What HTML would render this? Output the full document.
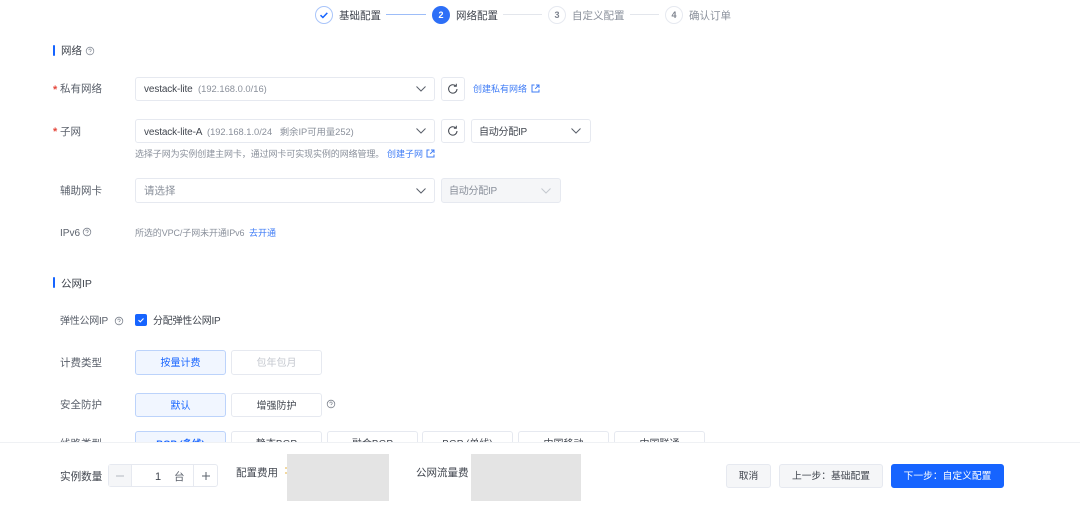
<!DOCTYPE html>
<html lang="zh"><head><meta charset="utf-8">
<style>
html,body{margin:0;padding:0;background:#fff}
#p{position:relative;width:1080px;height:517px;overflow:hidden;background:#fff;font-family:"Liberation Sans","Noto Sans CJK SC",sans-serif;font-size:10.5px;color:#41464f;filter:blur(.35px)}
#p *{box-sizing:border-box}
.t{position:absolute;white-space:nowrap;line-height:14px;height:14px}
.b{position:absolute;border:1px solid #e6e9f0;border-radius:3px;background:#fff}
.btn{position:absolute;border:1px solid #e6e9f0;border-radius:3px;background:#fff;text-align:center;font-size:10px;color:#41464f}
.on{background:#f1f6ff;border-color:#bcd3fb;color:#1664ff}
.c{position:absolute;border-radius:50%;text-align:center;font-weight:bold;font-size:9px}
.l{position:absolute;height:1px}
.g{color:#8a909b}.lb{color:#5a606b}.bl{color:#3f7cf6}
.star{color:#e5483d;font-size:11px;font-weight:bold}
.s9{font-size:9px}.s10{font-size:10px;letter-spacing:-.25px}
.v{font-size:10px;letter-spacing:-.12px}
svg{position:absolute;overflow:visible}
.bar{position:absolute;left:53px;width:2px;height:11px;background:#1664ff;border-radius:1px}
.gray{position:absolute;background:#e4e4e4;top:454px;height:47px}
.ft{font-size:9.75px}
</style></head><body><div id="p">

<!-- steps -->
<div class="c" style="left:315px;top:6px;width:18px;height:18px;border:1.5px solid #a9c5fa"></div>
<svg style="left:315px;top:6px" width="18" height="18"><path d="M5.5 9.2l2.4 2.3 4.4-4.6" fill="none" stroke="#1664ff" stroke-width="1.5"/></svg>
<div class="t" style="left:339px;top:9px;color:#41464f">基础配置</div>
<div class="l" style="left:386px;top:14px;width:40px;background:#9dbdf8"></div>
<div class="c" style="left:432px;top:6px;width:18px;height:18px;background:#2d6ff7;color:#fff;line-height:18px">2</div>
<div class="t" style="left:456px;top:9px;color:#41464f">网络配置</div>
<div class="l" style="left:503px;top:14px;width:39px;background:#e3e6ec"></div>
<div class="c" style="left:548px;top:6px;width:18px;height:18px;border:1px solid #e6e9f0;color:#7d838e;line-height:16px">3</div>
<div class="t g" style="left:572px;top:9px">自定义配置</div>
<div class="l" style="left:630px;top:14px;width:29px;background:#e3e6ec"></div>
<div class="c" style="left:665px;top:6px;width:18px;height:18px;border:1px solid #e6e9f0;color:#7d838e;line-height:16px">4</div>
<div class="t g" style="left:689px;top:9px">确认订单</div>

<!-- section network -->
<div class="bar" style="top:45px"></div>
<div class="t" style="left:61px;top:44px">网络</div>
<svg style="left:85px;top:46px" width="10" height="10"><circle cx="5" cy="5" r="3.8" fill="none" stroke="#8a909b" stroke-width=".8"/><path d="M3.8 4.2a1.2 1.2 0 1 1 1.7 1.1c-.4.2-.5.4-.5.8M5 7v.4" fill="none" stroke="#8a909b" stroke-width=".7"/></svg>

<!-- row 1 -->
<div class="t star" style="left:53px;top:83px">*</div>
<div class="t lb" style="left:60px;top:82px">私有网络</div>
<div class="b" style="left:135px;top:77px;width:300px;height:24px"></div>
<div class="t v" style="left:144px;top:83px">vestack-lite</div>
<div class="t g" style="left:198px;top:82px;font-size:9.4px">(192.168.0.0/16)</div>
<svg style="left:415px;top:85px" width="12" height="8"><path d="M1.5 1.5L6 6l4.5-4.5" fill="none" stroke="#5a606b" stroke-width="1"/></svg>
<div class="b" style="left:441px;top:77px;width:24px;height:24px"></div>
<svg style="left:447px;top:83px" width="12" height="12"><path d="M10 6a4.2 4.2 0 1 1-1.2-3M9.3 .8V3.2H6.9" fill="none" stroke="#41464f" stroke-width="1"/></svg>
<div class="t bl s9" style="left:473px;top:82px">创建私有网络</div>
<svg style="left:531px;top:84px" width="9" height="9"><path d="M3.5 1H1v7h7V5.5M5 1h3v3M8 1L4.2 4.8" fill="none" stroke="#3f7cf6" stroke-width="1"/></svg>

<!-- row 2 -->
<div class="t star" style="left:53px;top:125px">*</div>
<div class="t lb" style="left:60px;top:125px">子网</div>
<div class="b" style="left:135px;top:119px;width:300px;height:24px"></div>
<div class="t v" style="left:144px;top:126px">vestack-lite-A</div>
<div class="t g" style="left:207px;top:125px;font-size:9.3px">(192.168.1.0/24&nbsp;&nbsp;&nbsp;剩余IP可用量252)</div>
<svg style="left:415px;top:127px" width="12" height="8"><path d="M1.5 1.5L6 6l4.5-4.5" fill="none" stroke="#5a606b" stroke-width="1"/></svg>
<div class="b" style="left:441px;top:119px;width:24px;height:24px"></div>
<svg style="left:447px;top:125px" width="12" height="12"><path d="M10 6a4.2 4.2 0 1 1-1.2-3M9.3 .8V3.2H6.9" fill="none" stroke="#41464f" stroke-width="1"/></svg>
<div class="b" style="left:471px;top:119px;width:120px;height:24px"></div>
<div class="t s10" style="left:479px;top:126px">自动分配IP</div>
<svg style="left:570px;top:127px" width="12" height="8"><path d="M1.5 1.5L6 6l4.5-4.5" fill="none" stroke="#5a606b" stroke-width="1"/></svg>
<div class="t g s9" style="left:135px;top:147px;letter-spacing:-.1px">选择子网为实例创建主网卡，通过网卡可实现实例的网络管理。</div>
<div class="t bl s9" style="left:387px;top:147px">创建子网</div>
<svg style="left:426px;top:149px" width="9" height="9"><path d="M3.5 1H1v7h7V5.5M5 1h3v3M8 1L4.2 4.8" fill="none" stroke="#3f7cf6" stroke-width="1"/></svg>

<!-- row 3 -->
<div class="t lb" style="left:60px;top:184px">辅助网卡</div>
<div class="b" style="left:135px;top:178px;width:300px;height:25px"></div>
<div class="t g" style="left:144px;top:184px">请选择</div>
<svg style="left:415px;top:187px" width="12" height="8"><path d="M1.5 1.5L6 6l4.5-4.5" fill="none" stroke="#5a606b" stroke-width="1"/></svg>
<div class="b" style="left:441px;top:178px;width:120px;height:25px;background:#f5f6f8"></div>
<div class="t g s10" style="left:449px;top:185px">自动分配IP</div>
<svg style="left:540px;top:187px" width="12" height="8"><path d="M1.5 1.5L6 6l4.5-4.5" fill="none" stroke="#c4c8cf" stroke-width="1"/></svg>

<!-- ipv6 -->
<div class="t lb s10" style="left:60px;top:227px;letter-spacing:0">IPv6</div>
<svg style="left:82px;top:227px" width="10" height="10"><circle cx="5" cy="5" r="3.8" fill="none" stroke="#7d838e" stroke-width=".8"/><path d="M3.8 4.2a1.2 1.2 0 1 1 1.7 1.1c-.4.2-.5.4-.5.8M5 7v.4" fill="none" stroke="#7d838e" stroke-width=".7"/></svg>
<div class="t g s9" style="left:135px;top:226px;letter-spacing:-.1px">所选的VPC/子网未开通IPv6</div>
<div class="t bl s9" style="left:249px;top:226px">去开通</div>

<!-- section public IP -->
<div class="bar" style="top:277px"></div>
<div class="t" style="left:61px;top:277px">公网IP</div>

<div class="t lb s10" style="left:60px;top:315px">弹性公网IP</div>
<svg style="left:114px;top:316px" width="10" height="10"><circle cx="5" cy="5" r="3.8" fill="none" stroke="#7d838e" stroke-width=".8"/><path d="M3.8 4.2a1.2 1.2 0 1 1 1.7 1.1c-.4.2-.5.4-.5.8M5 7v.4" fill="none" stroke="#7d838e" stroke-width=".7"/></svg>
<div style="position:absolute;left:135px;top:314px;width:12px;height:12px;background:#1664ff;border-radius:2px"></div>
<svg style="left:135px;top:314px" width="12" height="12"><path d="M3.5 6.2l1.8 1.7 3.2-3.4" fill="none" stroke="#fff" stroke-width="1.1"/></svg>
<div class="t s10" style="left:153px;top:315px">分配弹性公网IP</div>

<div class="t lb" style="left:60px;top:356px">计费类型</div>
<div class="btn on" style="left:135px;top:350px;width:91px;height:25px;line-height:26px">按量计费</div>
<div class="btn" style="left:231px;top:350px;width:91px;height:25px;line-height:26px;color:#c4c8cf">包年包月</div>

<div class="t lb" style="left:60px;top:398px">安全防护</div>
<div class="btn on" style="left:135px;top:393px;width:91px;height:24px;line-height:26px">默认</div>
<div class="btn" style="left:231px;top:393px;width:91px;height:24px;line-height:26px">增强防护</div>
<svg style="left:326px;top:399px" width="10" height="10"><circle cx="5" cy="5" r="3.8" fill="none" stroke="#7d838e" stroke-width=".8"/><path d="M3.8 4.2a1.2 1.2 0 1 1 1.7 1.1c-.4.2-.5.4-.5.8M5 7v.4" fill="none" stroke="#7d838e" stroke-width=".7"/></svg>

<div class="t lb" style="left:60px;top:437px">线路类型</div>
<div class="btn on" style="left:135px;top:431px;width:91px;height:24px;line-height:25px;font-weight:bold;font-size:9.5px">BGP (多线)</div>
<div class="btn" style="left:231px;top:431px;width:91px;height:24px;line-height:25px">静态BGP</div>
<div class="btn" style="left:327px;top:431px;width:91px;height:24px;line-height:25px">融合BGP</div>
<div class="btn" style="left:422px;top:431px;width:91px;height:24px;line-height:25px">BGP (单线)</div>
<div class="btn" style="left:518px;top:431px;width:91px;height:24px;line-height:25px">中国移动</div>
<div class="btn" style="left:614px;top:431px;width:91px;height:24px;line-height:25px">中国联通</div>

<!-- footer -->
<div style="position:absolute;left:0;top:442px;width:1080px;height:75px;background:#fff;border-top:1px solid #eff1f4"></div>
<div class="t" style="left:60px;top:470px;font-size:10.6px">实例数量</div>
<div class="b" style="left:108px;top:464px;width:110px;height:23px"></div>
<div style="position:absolute;left:109px;top:465px;width:23px;height:21px;background:#f5f6f8;border-right:1px solid #e6e9f0"></div>
<div style="position:absolute;left:193px;top:465px;width:1px;height:21px;background:#e6e9f0"></div>
<svg style="left:115px;top:471px" width="10" height="10"><path d="M1 5h8" stroke="#b4b8c0" stroke-width="1"/></svg>
<svg style="left:201px;top:471px" width="10" height="10"><path d="M1 5h8M5 1v8" stroke="#5a606b" stroke-width="1"/></svg>
<div class="t" style="left:155px;top:470px;font-size:11px">1</div>
<div class="t lb" style="left:174px;top:470px">台</div>
<div class="t" style="left:236px;top:466px">配置费用</div>
<div style="position:absolute;left:285px;top:467px;width:2px;height:2px;background:#f3d9a0"></div>
<div style="position:absolute;left:285px;top:472px;width:2px;height:2px;background:#f3d9a0"></div>
<div class="gray" style="left:287px;width:102px"></div>
<div class="t" style="left:416px;top:466px">公网流量费</div>
<div class="gray" style="left:471px;width:110px"></div>

<div class="btn ft" style="left:726px;top:464px;width:45px;height:24px;line-height:24px;background:#f5f6f8">取消</div>
<div class="btn ft" style="left:779px;top:464px;width:104px;height:24px;line-height:24px;background:#f5f6f8">上一步：基础配置</div>
<div class="btn ft" style="left:891px;top:464px;width:113px;height:24px;line-height:24px;background:#1664ff;border-color:#1664ff;color:#fff">下一步：自定义配置</div>

</div></body></html>
